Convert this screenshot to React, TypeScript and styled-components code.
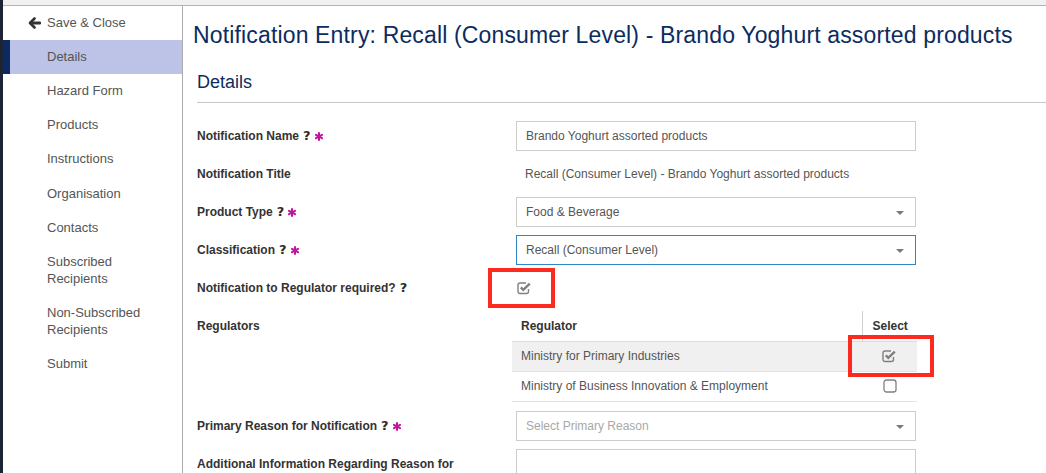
import styled, { createGlobalStyle } from "styled-components";

const GlobalStyle = createGlobalStyle`
  html, body {
    margin: 0;
    padding: 0;
    background: #ffffff;
    overflow: hidden;
  }
  body {
    font-family: "Liberation Sans", Arial, Helvetica, sans-serif;
  }
  * {
    box-sizing: border-box;
  }
`;

const Screen = styled.div`
  display: flex;
  width: 1046px;
  height: 473px;
  overflow: hidden;
`;

const Edge = styled.div`
  width: 3px;
  flex: none;
  background: #1d2434;
`;

const Frame = styled.div`
  flex: 1;
  display: flex;
  flex-direction: column;
  min-width: 0;
`;

const TopStrip = styled.div`
  height: 6px;
  flex: none;
  background: #f1f1f1;
  border-bottom: 1px solid #b4b4b4;
`;

const Body = styled.div`
  flex: 1;
  display: flex;
  min-height: 0;
`;

const Sidebar = styled.nav`
  width: 180px;
  flex: none;
  border-right: 1px solid #acacac;
  display: flex;
  flex-direction: column;
`;

const BackLink = styled.div`
  display: flex;
  align-items: center;
  gap: 6px;
  height: 34px;
  padding-left: 25px;
  padding-bottom: 1px;
  font-size: 13px;
  color: #555;
`;

const NavItem = styled.div<{ $active?: boolean }>`
  padding: 7.8px 8px 9.4px ${(p) => (p.$active ? 37 : 44)}px;
  line-height: 17px;
  font-size: 13px;
  color: #555;
  background: ${(p) => (p.$active ? "#bcc3e7" : "transparent")};
  border-left: ${(p) => (p.$active ? "7px solid #0b2a63" : "none")};
`;

const Main = styled.main`
  flex: 1;
  min-width: 0;
  padding-left: 10px;
`;

const Title = styled.h1`
  margin: 16px 0 0;
  font-size: 23px;
  line-height: 26px;
  letter-spacing: 0.15px;
  font-weight: 400;
  color: #0c2c60;
  white-space: nowrap;
`;

const Section = styled.section`
  margin-left: 4px;
`;

const SectionHeading = styled.h2`
  margin: 23px 0 0;
  padding-bottom: 9px;
  font-size: 18px;
  line-height: 22px;
  font-weight: 400;
  color: #0c2c60;
  border-bottom: 1px solid #c8c8c8;
`;

const Form = styled.div`
  display: grid;
  grid-template-columns: 319px 400px;
  row-gap: 8px;
  margin-top: 18px;
`;

const Label = styled.div`
  align-self: start;
  padding: 7px 30px 7px 0;
  line-height: 16px;
  font-size: 12px;
  font-weight: 700;
  color: #333;
`;

const Help = styled.span`
  margin-left: 4px;
  font-family: "DejaVu Sans", sans-serif;
  font-weight: 700;
  font-size: 13px;
  color: #2b2b2b;
`;

const Required = styled.svg`
  margin-left: 4px;
  vertical-align: -1px;
`;

const Field = styled.div<{ $focus?: boolean; $tall?: boolean }>`
  position: relative;
  height: ${(p) => (p.$tall ? 60 : 30)}px;
  display: flex;
  align-items: center;
  padding: 0 28px 0 9px;
  border: 1px solid ${(p) => (p.$focus ? "#2d86c6" : "#cccccc")};
  background: #fff;
  font-size: 12px;
  color: #555;
`;

const Placeholder = styled.span`
  color: #a8a8a8;
`;

const Caret = styled.span`
  position: absolute;
  right: 11px;
  top: 13px;
  width: 0;
  height: 0;
  border-left: 4px solid transparent;
  border-right: 4px solid transparent;
  border-top: 4px solid #7a7a7a;
`;

const StaticText = styled.div`
  height: 30px;
  display: flex;
  align-items: center;
  padding-left: 9px;
  font-size: 12px;
  color: #555;
`;

const CheckCell = styled.div`
  height: 30px;
  display: flex;
  align-items: center;
  padding-left: 1px;
`;

const BoxWrap = styled.span`
  position: relative;
  display: inline-flex;
`;

const Highlight = styled.span<{ $t: number; $r: number; $b: number; $l: number }>`
  position: absolute;
  top: ${(p) => p.$t}px;
  right: ${(p) => p.$r}px;
  bottom: ${(p) => p.$b}px;
  left: ${(p) => p.$l}px;
  border: 4px solid #fd2a20;
  pointer-events: none;
`;

const Table = styled.table`
  width: 405px;
  margin-left: -4px;
  border-collapse: collapse;
  font-size: 12px;
  margin-bottom: 1px;
`;

const Th = styled.th<{ $select?: boolean }>`
  height: 30px;
  padding: 0 ${(p) => (p.$select ? "0 0 10px" : "0 0 9px")};
  text-align: left;
  font-weight: 700;
  color: #333;
  border-bottom: 1px solid #dcdcdc;
  border-left: ${(p) => (p.$select ? "1px solid #cfcfcf" : "none")};
  width: ${(p) => (p.$select ? "55px" : "auto")};
`;

const Tr = styled.tr<{ $shaded?: boolean }>`
  background: ${(p) => (p.$shaded ? "#f0f0f0" : "transparent")};
`;

const Td = styled.td<{ $center?: boolean }>`
  height: 30px;
  padding: ${(p) => (p.$center ? "3px 0 0 0" : "0 0 0 9px")};
  color: #555;
  border-bottom: 1px solid #e3e3e3;
  text-align: ${(p) => (p.$center ? "center" : "left")};
`;

function ArrowLeft() {
  return (
    <svg width="13" height="12" viewBox="0 0 13 12">
      <path
        d="M6.5 1.5 L2 6 L6.5 10.5"
        fill="none"
        stroke="#333"
        strokeWidth="2.6"
        strokeLinecap="round"
        strokeLinejoin="round"
      />
      <path d="M2.5 6 H12" stroke="#333" strokeWidth="2.8" strokeLinecap="round" />
    </svg>
  );
}

function Asterisk() {
  return (
    <Required width="8" height="9" viewBox="0 0 8 9">
      <g stroke="#c0169a" strokeWidth="2" strokeLinecap="round">
        <path d="M4 1 V8" />
        <path d="M1 2.8 L7 6.2" />
        <path d="M1 6.2 L7 2.8" />
      </g>
    </Required>
  );
}

function CheckBox({ checked }: { checked?: boolean }) {
  if (!checked) {
    return (
      <svg width="14" height="14" viewBox="0 0 14 14">
        <rect x="1" y="1" width="12" height="12" rx="2.5" fill="none" stroke="#808080" strokeWidth="1.3" />
      </svg>
    );
  }
  return (
    <svg width="15" height="14" viewBox="0 0 15 14">
      <path
        d="M11.5 8 V10.5 A2 2 0 0 1 9.5 12.5 H3 A2 2 0 0 1 1 10.5 V4 A2 2 0 0 1 3 2 H9"
        fill="none"
        stroke="#808080"
        strokeWidth="1.4"
      />
      <path
        d="M3.8 6.4 L6.3 8.9 L12.8 2.6"
        fill="none"
        stroke="#808080"
        strokeWidth="2.4"
        strokeLinejoin="miter"
      />
    </svg>
  );
}

const navItems = [
  ["Hazard Form"],
  ["Products"],
  ["Instructions"],
  ["Organisation"],
  ["Contacts"],
  ["Subscribed", "Recipients"],
  ["Non-Subscribed", "Recipients"],
  ["Submit"],
];

const regulators = [
  { name: "Ministry for Primary Industries", selected: true },
  { name: "Ministry of Business Innovation & Employment", selected: false },
];

function App() {
  return (
    <>
      <GlobalStyle />
      <Screen>
        <Edge />
        <Frame>
          <TopStrip />
          <Body>
            <Sidebar>
              <BackLink>
                <ArrowLeft />
                Save &amp; Close
              </BackLink>
              <NavItem $active>Details</NavItem>
              {navItems.map((lines) => (
                <NavItem key={lines.join(" ")}>
                  {lines.map((w) => (
                    <div key={w}>{w}</div>
                  ))}
                </NavItem>
              ))}
            </Sidebar>

            <Main>
              <Title>Notification Entry: Recall (Consumer Level) - Brando Yoghurt assorted products</Title>
              <Section>
                <SectionHeading>Details</SectionHeading>
                <Form>
                  <Label>
                    Notification Name<Help>?</Help>
                    <Asterisk />
                  </Label>
                  <Field>Brando Yoghurt assorted products</Field>

                  <Label>Notification Title</Label>
                  <StaticText>Recall (Consumer Level) - Brando Yoghurt assorted products</StaticText>

                  <Label>
                    Product Type<Help>?</Help>
                    <Asterisk />
                  </Label>
                  <Field>
                    Food &amp; Beverage
                    <Caret />
                  </Field>

                  <Label>
                    Classification<Help>?</Help>
                    <Asterisk />
                  </Label>
                  <Field $focus>
                    Recall (Consumer Level)
                    <Caret />
                  </Field>

                  <Label>
                    Notification to Regulator required?<Help>?</Help>
                  </Label>
                  <CheckCell>
                    <BoxWrap>
                      <CheckBox checked />
                      <Highlight $t={-13} $r={-23} $b={-13} $l={-29} />
                    </BoxWrap>
                  </CheckCell>

                  <Label>Regulators</Label>
                  <Table>
                    <thead>
                      <tr>
                        <Th>Regulator</Th>
                        <Th $select>Select</Th>
                      </tr>
                    </thead>
                    <tbody>
                      {regulators.map((r, i) => (
                        <Tr key={r.name} $shaded={i === 0}>
                          <Td>{r.name}</Td>
                          <Td $center>
                            <BoxWrap>
                              <CheckBox checked={r.selected} />
                              {r.selected ? <Highlight $t={-14} $r={-37} $b={-14} $l={-34} /> : null}
                            </BoxWrap>
                          </Td>
                        </Tr>
                      ))}
                    </tbody>
                  </Table>

                  <Label>
                    Primary Reason for Notification<Help>?</Help>
                    <Asterisk />
                  </Label>
                  <Field>
                    <Placeholder>Select Primary Reason</Placeholder>
                    <Caret />
                  </Field>

                  <Label>Additional Information Regarding Reason for Notification</Label>
                  <Field $tall />
                </Form>
              </Section>
            </Main>
          </Body>
        </Frame>
      </Screen>
    </>
  );
}

export default App;
